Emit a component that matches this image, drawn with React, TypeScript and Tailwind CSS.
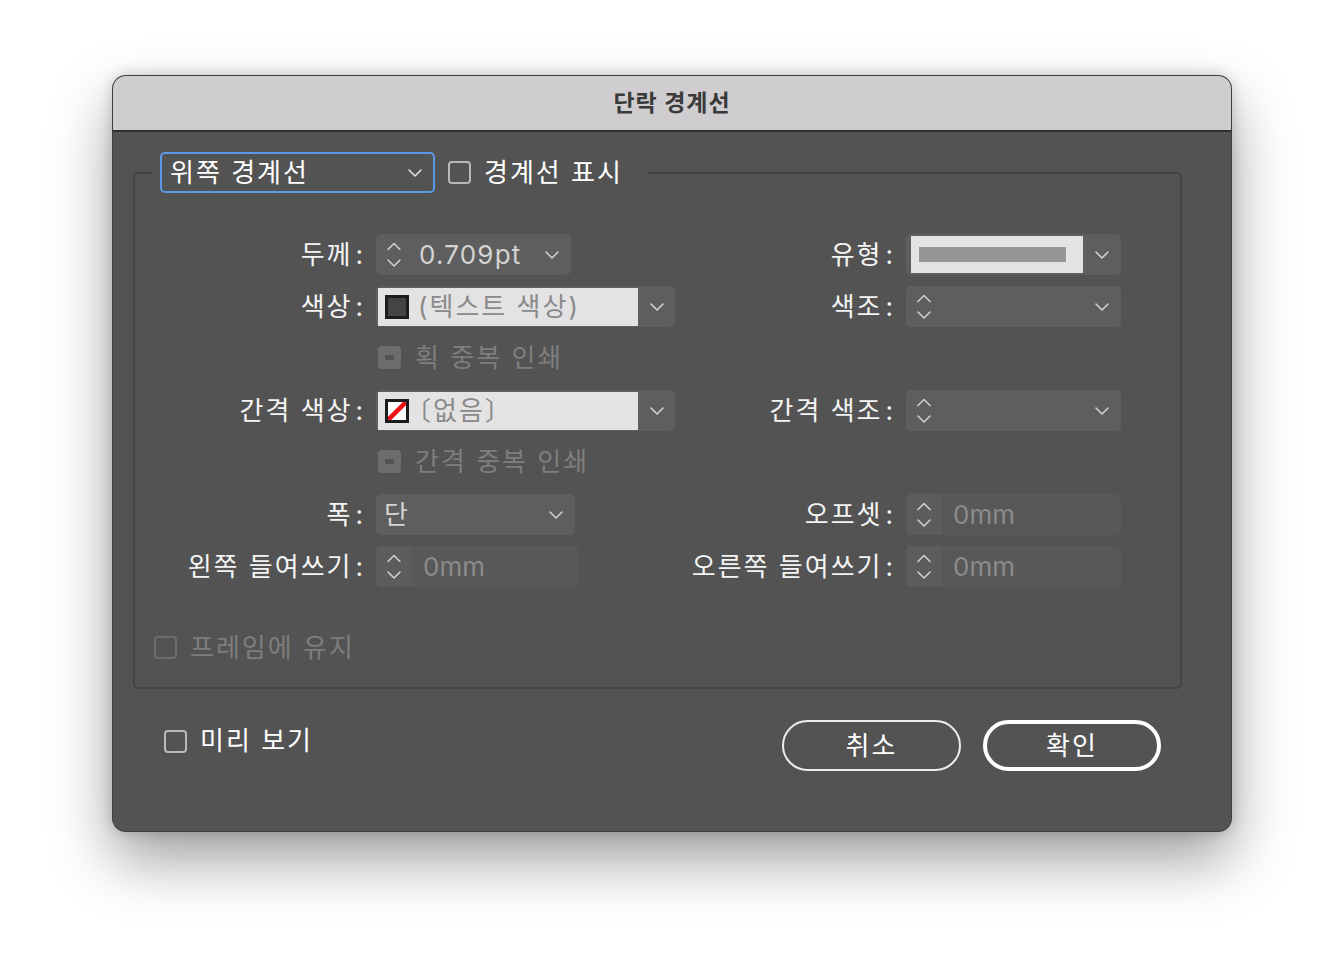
import type { ReactNode } from 'react';

const FONT = "font-['Inter','Noto_Sans_CJK_KR',sans-serif]";
const ROW = 'grid grid-cols-[228px_300px_204px_215px] gap-x-[13px] items-center h-[41px]';
const TXT = 'text-[26px] leading-none tracking-[2px]';

function Chevron({ className = '' }: { className?: string }) {
  return (
    <svg width="16" height="10" viewBox="0 0 16 10" className={className}>
      <path d="M2 2l6 6 6-6" fill="none" stroke="currentColor" strokeWidth="1.6" strokeLinecap="round" strokeLinejoin="round" />
    </svg>
  );
}

function Spinner() {
  return (
    <div className="flex flex-col items-center gap-[7px] text-[#cfcfcf]">
      <svg width="16" height="9" viewBox="0 0 16 9">
        <path d="M2 7.5l6-6 6 6" fill="none" stroke="currentColor" strokeWidth="1.6" strokeLinecap="round" strokeLinejoin="round" />
      </svg>
      <Chevron />
    </div>
  );
}

function Label({ children }: { children: ReactNode }) {
  return (
    <div className="text-right text-[26px] leading-none text-[#f4f4f4] whitespace-nowrap">
      <span className="tracking-[2px]">{children}</span>
      <span className="ml-[3px]">:</span>
    </div>
  );
}

function Check({ disabled = false }: { disabled?: boolean }) {
  return (
    <span
      className={`block w-[23px] h-[23px] rounded-[4px] border-2 shrink-0 ${
        disabled ? 'border-[#6c6c6c]' : 'border-[#b9b9b9]'
      }`}
    />
  );
}

function MixedCheck({ label }: { label: string }) {
  return (
    <div className="col-start-2 flex items-center gap-[14px] pl-[2px]">
      <span className="w-[23px] h-[23px] rounded-[4px] bg-[#6d6d6d] flex items-center justify-center">
        <span className="w-[9px] h-[5px] bg-[#555555]" />
      </span>
      <span className={`${TXT} text-[#7e7e7e]`}>{label}</span>
    </div>
  );
}

function ColorSelect({ swatch, text, textClass = '' }: { swatch: ReactNode; text: string; textClass?: string }) {
  return (
    <div className="w-[299px] h-[41px] rounded-[5px] bg-[#5e5e5e] flex">
      <div className="w-[260px] h-[38px] mt-[2px] ml-[2px] bg-[#e3e3e3] flex items-center pl-[7px] gap-[9px]">
        {swatch}
        <span className={`${TXT} text-[#8a8a8a] ${textClass}`}>{text}</span>
      </div>
      <div className="flex-1 flex items-center justify-center text-[#d0d0d0]">
        <Chevron />
      </div>
    </div>
  );
}

function TintSelect() {
  return (
    <div className="w-[215px] h-[41px] rounded-[5px] bg-[#5e5e5e] flex items-center pl-[10px] pr-[11px] justify-between">
      <Spinner />
      <Chevron className="text-[#d0d0d0]" />
    </div>
  );
}

function MmField({ w }: { w: string }) {
  return (
    <div className={`${w} h-[41px] rounded-[5px] bg-[#585858] flex overflow-hidden`}>
      <div className="w-[36px] bg-[#5c5c5c] flex items-center justify-center">
        <Spinner />
      </div>
      <span className="self-center pl-[11px] text-[26px] leading-none text-[#8b8b8b]">0mm</span>
    </div>
  );
}

export default function App() {
  return (
    <div className={`w-[1344px] h-[980px] bg-white pt-[75px] pl-[112px] ${FONT}`}>
      <div className="w-[1120px] h-[757px] rounded-[14px] overflow-hidden border border-black/25 bg-[#535353] shadow-[0_28px_60px_rgba(0,0,0,0.38),0_0_14px_rgba(0,0,0,0.18)] flex flex-col">
        {/* 제목 표시줄 */}
        <div className="h-[56px] shrink-0 bg-[#cfcdd0] border-b-2 border-[#2e2e2e] flex items-center justify-center">
          <span className="text-[23px] font-bold tracking-[1px] text-[#3a3a3a] leading-none">단락 경계선</span>
        </div>

        <div className="pt-[20px] pl-[20px]">
          <fieldset className="w-[1049px] border-2 border-[#444444] rounded-[5px] pb-[19px]">
            <legend className="ml-[17px] pl-[8px] pr-[25px] flex items-center">
              <div className="w-[275px] h-[41px] rounded-[5px] border-2 border-[#5a9ae6] flex items-center justify-between pl-[8px] pr-[10px]">
                <span className={`${TXT} text-white`}>위쪽 경계선</span>
                <Chevron className="text-[#e0e0e0]" />
              </div>
              <span className="ml-[13px]">
                <Check />
              </span>
              <span className={`ml-[13px] ${TXT} text-white`}>경계선 표시</span>
            </legend>

            <div className={`${ROW} mt-[41px]`}>
              <Label>두께</Label>
              <div className="w-[195px] h-[41px] rounded-[5px] bg-[#5e5e5e] flex items-center pl-[10px] pr-[11px]">
                <Spinner />
                <span className="ml-[17px] text-[26px] leading-none tracking-[1.2px] text-[#d4d4d4]">0.709pt</span>
                <Chevron className="ml-auto text-[#cfcfcf]" />
              </div>
              <Label>유형</Label>
              <div className="w-[215px] h-[41px] rounded-[5px] bg-[#5e5e5e] flex">
                <div className="w-[172px] h-[37px] mt-[2px] ml-[5px] bg-[#e3e3e3] flex items-center pl-[8px]">
                  <div className="w-[147px] h-[15px] bg-[#969696]" />
                </div>
                <div className="flex-1 flex items-center justify-center text-[#d0d0d0]">
                  <Chevron />
                </div>
              </div>
            </div>

            <div className={`${ROW} mt-[11px]`}>
              <Label>색상</Label>
              <ColorSelect
                swatch={<span className="w-[24px] h-[24px] border-[3px] border-[#1c1c1c] bg-[#444444]" />}
                text="(텍스트 색상)"
              />
              <Label>색조</Label>
              <TintSelect />
            </div>

            <div className={`${ROW} mt-[10px]`}>
              <MixedCheck label="획 중복 인쇄" />
            </div>

            <div className={`${ROW} mt-[12px]`}>
              <Label>간격 색상</Label>
              <ColorSelect
                swatch={
                  <span className="w-[24px] h-[24px] border-[3px] border-[#1c1c1c] bg-white overflow-hidden">
                    <svg width="18" height="18" viewBox="0 0 18 18" className="block">
                      <path d="M-1 19L19 -1" stroke="#ee1111" strokeWidth="4.5" />
                    </svg>
                  </span>
                }
                text="〔없음〕"
                textClass="-ml-[13px] tracking-[0px]"
              />
              <Label>간격 색조</Label>
              <TintSelect />
            </div>

            <div className={`${ROW} mt-[10px]`}>
              <MixedCheck label="간격 중복 인쇄" />
            </div>

            <div className={`${ROW} mt-[12px]`}>
              <Label>폭</Label>
              <div className="w-[199px] h-[41px] rounded-[5px] bg-[#5e5e5e] flex items-center pl-[8px] pr-[11px] justify-between">
                <span className="text-[26px] leading-none text-[#d4d4d4]">단</span>
                <Chevron className="text-[#cfcfcf]" />
              </div>
              <Label>오프셋</Label>
              <MmField w="w-[215px]" />
            </div>

            <div className={`${ROW} mt-[11px]`}>
              <Label>왼쪽 들여쓰기</Label>
              <MmField w="w-[203px]" />
              <Label>오른쪽 들여쓰기</Label>
              <MmField w="w-[215px]" />
            </div>

            <div className="mt-[40px] h-[41px] flex items-center gap-[13px] pl-[19px]">
              <Check disabled />
              <span className={`${TXT} text-[#7e7e7e]`}>프레임에 유지</span>
            </div>
          </fieldset>

          {/* 하단 */}
          <div className="w-[1049px] mt-[31px] flex items-start justify-between pl-[31px] pr-[21px]">
            <div className="mt-[8px] flex items-center gap-[13px]">
              <Check />
              <span className={`${TXT} text-white`}>미리 보기</span>
            </div>
            <div className="flex gap-[22px]">
              <button className="w-[179px] h-[51px] rounded-full border-2 border-[#ececec] text-[26px] leading-none tracking-[2px] text-white">
                취소
              </button>
              <button className="w-[178px] h-[51px] rounded-full border-4 border-white text-[26px] leading-none tracking-[2px] text-white">
                확인
              </button>
            </div>
          </div>
        </div>
      </div>
    </div>
  );
}
